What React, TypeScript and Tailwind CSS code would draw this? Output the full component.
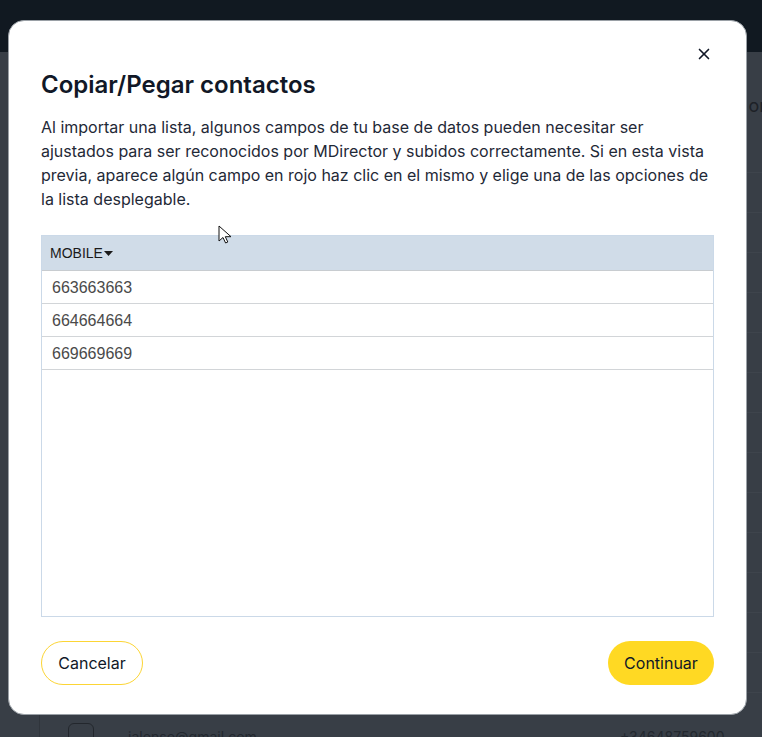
import { X } from "lucide-react";

const rows = ["663663663", "664664664", "669669669"];

function Backdrop() {
  // dimmed page behind the modal
  return (
    <div className="absolute inset-0 flex flex-col bg-[#383e46]">
      <div className="h-[52px] bg-[#111921]" />
      <div className="flex flex-1">
        <div className="w-[40px] border-r border-[#30353c]" />
        <div className="flex flex-1 flex-col">
          <div className="flex h-[81px] items-end justify-end pb-[14px] text-[18px] text-[#1d2127]">
            <span className="-mr-[4px]">or</span>
          </div>
          {[0, 1, 2, 3, 4, 5, 6, 7, 8, 9, 10, 11, 12, 13].map((i) => (
            <div key={i} className="h-[40px] border-b border-[#3e444c]" />
          ))}
        </div>
      </div>
      <div className="absolute left-[68px] top-[723px] h-[26px] w-[26px] rounded-md border border-[#23272d]" />
      <div className="absolute left-[128px] top-[726px] font-['Inter',sans-serif] text-[14px] text-[#23282f]">jalonso@gmail.com</div>
      <div className="absolute left-[620px] top-[726px] font-['Inter',sans-serif] text-[14px] text-[#23282f]">+34648759600</div>
    </div>
  );
}

export default function App() {
  return (
    <div className="relative h-[737px] w-[762px] overflow-hidden font-['Inter',sans-serif]">
      <Backdrop />

      <div className="absolute left-[8px] top-[20px] flex h-[695px] w-[739px] flex-col rounded-[16px] border border-[#9aa0a6] bg-white px-[32px] pb-[29px] pt-[22px]">
        <div className="flex justify-end">
          <button className="mr-[-1px] flex h-[22px] w-[22px] items-center justify-center text-[#111827]">
            <X size={18} strokeWidth={2.2} />
          </button>
        </div>

        <h2 className="mt-[5px] text-[24px] font-semibold leading-[30px] text-[#111827]">Copiar/Pegar contactos</h2>

        <p className="mt-[15px] text-[16px] leading-[24px] text-[#1f2937]">
          Al importar una lista, algunos campos de tu base de datos pueden necesitar ser ajustados para ser reconocidos
          por MDirector y subidos correctamente. Si en esta vista previa, aparece algún campo en rojo haz clic en el
          mismo y elige una de las opciones de la lista desplegable.
        </p>

        <div className="relative mt-[24px] flex h-[382px] flex-col border border-[#cbd9e8] font-['Liberation_Sans',Arial,sans-serif]">
          <div className="flex h-[35px] items-center border-b border-[#c8ccd0] bg-[#d0dce8] px-[8px] text-[14px] text-[#1a1a1a]">
            MOBILE
            <svg width="9" height="5" viewBox="0 0 9 5" className="ml-[1px]">
              <path d="M0 0h9L4.5 5z" fill="#1a1a1a" />
            </svg>
          </div>
          {rows.map((r) => (
            <div key={r} className="flex h-[33px] items-center border-b border-[#d2d5d8] px-[10px] pt-[1px] text-[16px] text-[#4a4a4a]">
              {r}
            </div>
          ))}
          <svg width="14" height="20" viewBox="0 0 14 20" className="absolute left-[176px] top-[-11px]">
            <path d="M1 1v15l4-3.5 2.6 5.5 2.2-1-2.5-5.3H13z" fill="white" stroke="#111" strokeWidth="1" strokeLinejoin="round" />
          </svg>
        </div>

        <div className="mt-auto flex items-center justify-between">
          <button className="h-[44px] w-[102px] rounded-full border border-[#fcd535] bg-white text-[16px] text-[#111827]">
            Cancelar
          </button>
          <button className="h-[44px] w-[106px] rounded-full bg-[#ffd923] text-[16px] text-[#111827]">Continuar</button>
        </div>
      </div>
    </div>
  );
}
